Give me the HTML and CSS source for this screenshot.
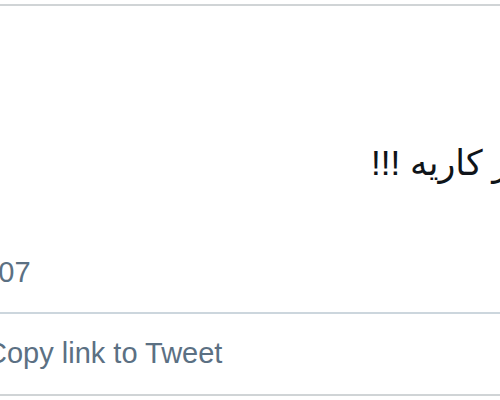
FILE: index.html
```html
<!DOCTYPE html>
<html lang="en">
<head>
<meta charset="utf-8">
<title>Tweet</title>
<link rel="stylesheet" href="styles.css">
</head>
<body>
<div class="card">
  <p class="tweet-text" dir="rtl" lang="fa">از کاریه !!!</p>
  <div class="meta"><span class="date">2007</span></div>
  <div class="actions"><span class="copy-link">Copy link to Tweet</span></div>
</div>
</body>
</html>
```

FILE: styles.css
```css
html, body {
  margin: 0;
  padding: 0;
  overflow: hidden;
  background: #ffffff;
}
body {
  font-family: "Liberation Sans", "DejaVu Sans", Arial, sans-serif;
}
.card {
  margin: 4px -12px 0 -13px;
  border-top: 2px solid #d0d4d6;
  border-bottom: 2px solid #d0d4d6;
}
.tweet-text {
  margin: 136px -7px 0 0;
  font-size: 35px;
  line-height: 42px;
  color: #0f1419;
  text-align: right;
  direction: rtl;
}
.meta {
  margin-top: 71px;
  padding-bottom: 23px;
  border-bottom: 2px solid #ccd6dd;
  font-size: 29px;
  line-height: 34px;
  color: #5b7083;
}
.date {
  display: inline-block;
  margin-left: -21px;
}
.actions {
  padding: 22px 0 24px 0;
  font-size: 29px;
  line-height: 34px;
  color: #5b7083;
}
.copy-link {
  display: inline-block;
  margin-left: -1px;
}
```
